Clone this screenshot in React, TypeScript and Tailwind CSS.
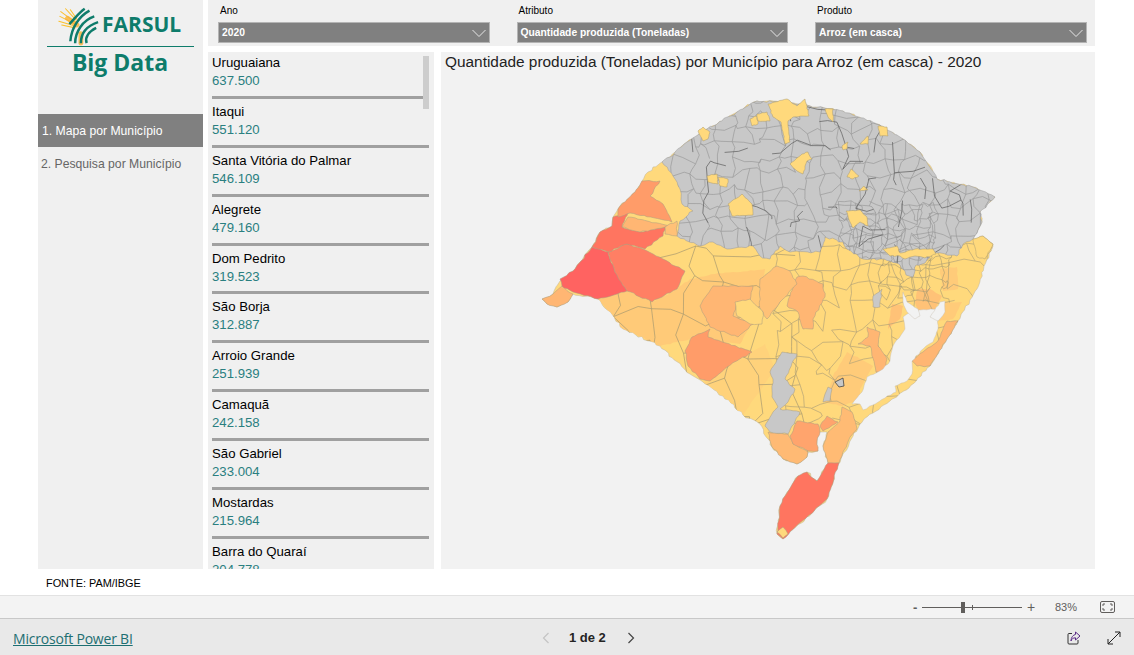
import React, { useMemo } from "react";

type Pt = [number, number];

const municipios = [
  ["Uruguaiana", "637.500"],
  ["Itaqui", "551.120"],
  ["Santa Vitória do Palmar", "546.109"],
  ["Alegrete", "479.160"],
  ["Dom Pedrito", "319.523"],
  ["São Borja", "312.887"],
  ["Arroio Grande", "251.939"],
  ["Camaquã", "242.158"],
  ["São Gabriel", "233.004"],
  ["Mostardas", "215.964"],
  ["Barra do Quaraí", "204.778"],
];

const outline: Pt[] = [
  [542, 300], [553, 295], [560, 282], [573, 272], [592, 248], [600, 233], [612, 227], [613, 218], [618, 210],
  [635, 193], [642, 182], [648, 173], [662, 163], [670, 158], [687, 143], [707, 130], [737, 113], [757, 102],
  [780, 103], [810, 107], [843, 112], [877, 125], [903, 140], [920, 153], [937, 180], [973, 188], [995, 198],
  [980, 213], [982, 223], [973, 240], [983, 237], [993, 245], [977, 290], [958, 322], [930, 367], [909, 389],
  [890, 402], [873, 414], [860, 425], [842, 457], [838, 465], [827, 500], [783, 540], [777, 535], [780, 507],
  [785, 497], [798, 477], [807, 473], [817, 482], [828, 464], [823, 447], [827, 433], [820, 433], [817, 442],
  [818, 452], [808, 453], [807, 458], [797, 465], [783, 460], [772, 448], [768, 440], [760, 425], [743, 416],
  [723, 397], [703, 383], [690, 375], [660, 347], [623, 330], [598, 300], [573, 295], [568, 303], [557, 308],
  [547, 305],
];

const grayNorth: Pt[] = [
  [662, 163], [670, 158], [687, 143], [707, 130], [737, 113], [757, 102], [780, 103], [810, 107], [843, 112],
  [877, 125], [903, 140], [920, 153], [937, 180], [973, 188], [995, 198], [980, 213], [982, 223], [973, 240],
  [963, 245], [957, 257], [933, 253], [925, 264], [916, 266], [913, 278], [906, 276], [900, 266], [890, 262],
  [880, 260], [863, 260], [847, 250], [843, 243], [825, 238], [820, 253], [790, 253], [780, 247], [770, 260],
  [760, 257], [753, 247], [727, 250], [713, 243], [700, 247], [677, 237], [680, 222], [693, 212], [682, 205],
  [680, 190], [673, 177],
];

// municipios com cor propria, desenhados por cima da malha
const regions: { fill: string; pts: Pt[] }[] = [
  { fill: "#ffb673", pts: [[542, 300], [553, 295], [562, 287], [573, 295], [568, 303], [557, 308], [547, 305]] },
  { fill: "#ff6361", pts: [[560, 280], [573, 272], [592, 248], [608, 253], [615, 273], [627, 292], [598, 300], [573, 293], [562, 287]] },
  { fill: "#ff7f64", pts: [[608, 253], [627, 245], [643, 250], [663, 260], [685, 272], [677, 290], [652, 303], [627, 292], [615, 273]] },
  { fill: "#ff7560", pts: [[592, 248], [600, 233], [612, 227], [613, 218], [628, 213], [622, 228], [640, 233], [665, 228], [663, 237], [645, 250], [627, 245], [608, 253]] },
  { fill: "#ffb673", pts: [[628, 218], [670, 227], [665, 228], [640, 233], [622, 228]] },
  { fill: "#ff9c69", pts: [[618, 210], [635, 193], [642, 182], [660, 182], [650, 197], [663, 205], [672, 223], [630, 214], [618, 218]] },
  { fill: "#ffc177", pts: [[665, 228], [677, 222], [677, 237], [665, 235]] },
  { fill: "#ffb673", pts: [[797, 278], [803, 277], [823, 285], [825, 298], [813, 320], [813, 330], [803, 330], [798, 313], [787, 307], [790, 297]] },
  { fill: "#ffc177", pts: [[777, 267], [790, 272], [797, 285], [780, 303], [767, 320], [760, 310], [760, 280]] },
  { fill: "#ffb673", pts: [[700, 307], [713, 287], [753, 287], [748, 307], [737, 303], [733, 317], [753, 325], [738, 338], [710, 328]] },
  { fill: "#ffd97c", pts: [[735, 303], [750, 300], [763, 313], [762, 325], [750, 325], [737, 317]] },
  { fill: "#ff9c69", pts: [[692, 338], [710, 330], [708, 338], [752, 353], [727, 368], [710, 382], [700, 380], [688, 367], [685, 352]] },
  { fill: "#ffb673", pts: [[867, 328], [880, 333], [878, 347], [887, 360], [885, 372], [876, 373], [870, 347], [858, 345], [868, 338]] },
  { fill: "#ffb673", pts: [[947, 322], [958, 322], [930, 367], [917, 367], [912, 362], [923, 353], [937, 343]] },
  { fill: "#ffba74", pts: [[768, 433], [788, 435], [793, 445], [808, 453], [807, 458], [797, 465], [783, 460], [772, 448]] },
  { fill: "#ffa46d", pts: [[797, 422], [818, 425], [820, 433], [817, 442], [818, 452], [808, 452], [793, 445], [790, 437]] },
  { fill: "#ffa46d", pts: [[820, 427], [827, 417], [838, 423], [823, 432]] },
  { fill: "#ffbb74", pts: [[842, 408], [852, 413], [857, 430], [850, 438], [842, 457], [839, 464], [828, 464], [823, 447], [828, 433], [840, 422]] },
  { fill: "#ff7560", pts: [[828, 464], [839, 464], [827, 500], [783, 540], [777, 535], [780, 507], [785, 497], [798, 477], [807, 473], [817, 482]] },
  { fill: "#ffd97c", pts: [[777, 533], [783, 528], [788, 535], [783, 539]] },
  { fill: "#c8c8c8", pts: [[782, 353], [797, 355], [785, 380], [795, 390], [788, 403], [780, 410], [800, 413], [792, 427], [788, 435], [770, 433], [765, 427], [773, 413], [778, 408], [772, 398], [773, 380], [770, 373]] },
  { fill: "#c8c8c8", pts: [[828, 388], [832, 390], [830, 402], [823, 403], [825, 395]] },
  { fill: "#c8c8c8", pts: [[873, 297], [882, 290], [880, 308], [873, 308]] },
];

const tones: { fill: string; pts: Pt[] }[] = [
  { fill: "#ffca78", pts: [[598, 300], [627, 292], [652, 303], [677, 290], [690, 280], [715, 275], [765, 270], [760, 310], [740, 345], [690, 340], [660, 347], [623, 330]] },
  { fill: "#ffd27b", pts: [[703, 383], [723, 397], [743, 416], [775, 370], [765, 345], [725, 368], [710, 382]] },
  { fill: "#ffcb79", pts: [[833, 377], [847, 353], [873, 367], [860, 390], [860, 400], [842, 407], [823, 403], [830, 387]] },
  { fill: "#ffc277", pts: [[918, 290], [930, 290], [942, 297], [933, 313], [920, 317], [915, 303]] },
  { fill: "#ffcb79", pts: [[940, 270], [957, 268], [958, 290], [943, 292]] },
  { fill: "#ffcb79", pts: [[943, 303], [962, 303], [953, 320], [938, 322]] },
  { fill: "#ffc277", pts: [[892, 305], [903, 307], [900, 320], [888, 330]] },
];

// municipios amarelos no meio da area cinza
const islands: Pt[][] = [
  [[698, 132], [703, 128], [710, 133], [708, 140], [703, 142]],
  [[707, 177], [717, 175], [718, 185], [708, 183]],
  [[718, 178], [728, 180], [727, 188], [720, 187]],
  [[728, 205], [742, 195], [752, 205], [753, 216], [732, 217]],
  [[750, 120], [757, 117], [758, 125], [752, 127]],
  [[757, 115], [767, 113], [770, 122], [758, 122]],
  [[768, 105], [787, 100], [797, 107], [805, 100], [809, 117], [793, 118], [788, 122], [790, 143], [785, 145], [781, 123], [773, 118]],
  [[825, 110], [833, 110], [833, 123], [828, 118]],
  [[878, 127], [887, 128], [888, 137], [880, 137]],
  [[860, 145], [868, 137], [868, 145]],
  [[842, 147], [848, 143], [847, 150], [843, 151]],
  [[790, 165], [802, 155], [808, 153], [812, 160], [807, 162], [803, 175], [797, 172]],
  [[847, 178], [851, 170], [859, 177], [853, 180]],
  [[859, 192], [864, 187], [868, 191]],
  [[846, 212], [860, 211], [867, 218], [868, 227], [860, 223], [853, 229], [850, 223]],
  [[973, 240], [983, 237], [993, 245], [985, 260], [977, 258]],
  [[883, 250], [897, 247], [900, 254], [915, 250], [933, 250], [936, 255], [925, 259], [915, 257], [905, 260], [900, 257], [890, 257]],
];

const lagoons: Pt[][] = [
  [[938, 310], [938, 330], [933, 343], [923, 350], [912, 362], [912, 375], [907, 382], [895, 387], [896, 393], [885, 399], [873, 406], [863, 411], [860, 405], [852, 405], [862, 393], [867, 378], [883, 370], [890, 362], [893, 347], [905, 330], [903, 318], [912, 312]],
  [[903, 293], [907, 303], [918, 310], [920, 317], [915, 320], [907, 313], [903, 303]],
  [[940, 303], [945, 302], [945, 313], [938, 322], [930, 318]],
];

const rng = (seed: number) => () => {
  seed = (seed * 1664525 + 1013904223) >>> 0;
  return seed / 4294967296;
};

// quebra as arestas retas para a fronteira parecer irregular
const jag = (pts: Pt[], amp: number, seed: number, step = 3.5) => {
  const r = rng(seed);
  const out: string[] = [];
  pts.forEach((p, i) => {
    const q = pts[(i + 1) % pts.length];
    const n = Math.max(1, Math.round(Math.hypot(q[0] - p[0], q[1] - p[1]) / step));
    for (let k = 0; k < n; k++) {
      const t = k / n;
      const dx = k === 0 ? 0 : (r() - 0.5) * amp;
      const dy = k === 0 ? 0 : (r() - 0.5) * amp;
      out.push(`${(p[0] + (q[0] - p[0]) * t + dx).toFixed(1)},${(p[1] + (q[1] - p[1]) * t + dy).toFixed(1)}`);
    }
  });
  return "M" + out.join("L") + "Z";
};

const mesh = (x0: number, y0: number, x1: number, y1: number, cell: number, drop: number, seed: number) => {
  const r = rng(seed);
  const cols = Math.ceil((x1 - x0) / cell);
  const rows = Math.ceil((y1 - y0) / cell);
  const nodes: Pt[][] = [];
  for (let j = 0; j <= rows; j++) {
    nodes.push([]);
    for (let i = 0; i <= cols; i++) {
      nodes[j].push([x0 + i * cell + (r() - 0.5) * cell * 0.8, y0 + j * cell + (r() - 0.5) * cell * 0.8]);
    }
  }
  const edge = (a: Pt, b: Pt) => {
    const mx = (a[0] + b[0]) / 2 + (r() - 0.5) * cell * 0.5;
    const my = (a[1] + b[1]) / 2 + (r() - 0.5) * cell * 0.5;
    return `M${a[0].toFixed(1)},${a[1].toFixed(1)}L${mx.toFixed(1)},${my.toFixed(1)}L${b[0].toFixed(1)},${b[1].toFixed(1)}`;
  };
  let d = "";
  for (let j = 0; j <= rows; j++) {
    for (let i = 0; i <= cols; i++) {
      if (i < cols && r() > drop) d += edge(nodes[j][i], nodes[j][i + 1]);
      if (j < rows && r() > drop) d += edge(nodes[j][i], nodes[j + 1][i]);
    }
  }
  return d;
};

const RsMap = () => {
  const paths = useMemo(
    () => ({
      state: jag(outline, 2.2, 7),
      gray: jag(grayNorth, 2, 11),
      westMesh: mesh(590, 250, 790, 440, 34, 0.2, 3),
      eastMesh: mesh(780, 250, 990, 420, 19, 0.15, 17),
      denseSouth: mesh(880, 250, 950, 300, 10, 0.12, 21),
      northMesh: mesh(660, 100, 1000, 262, 15, 0.14, 5),
      denseNorth: mesh(840, 205, 930, 262, 8, 0.12, 9),
      darkNorth: mesh(690, 110, 960, 250, 19, 0.78, 13),
    }),
    []
  );

  return (
    <svg viewBox="441 73 654 496" className="w-[654px] h-[496px] block blur-[0.3px]">
      <defs>
        <clipPath id="state-clip">
          <path d={paths.state} />
        </clipPath>
        <clipPath id="gray-clip">
          <path d={paths.gray} />
        </clipPath>
      </defs>
      <path d={paths.state} fill="#ffd97c" stroke="#c0b498" strokeWidth="0.5" />
      <g clipPath="url(#state-clip)">
        {tones.map((t, i) => (
          <path key={i} d={jag(t.pts, 1.2, 30 + i)} fill={t.fill} />
        ))}
        <path d={paths.westMesh} fill="none" stroke="#a89a70" strokeWidth="0.7" />
        <path d={paths.eastMesh} fill="none" stroke="#b3a478" strokeWidth="0.7" />
        <path d={paths.denseSouth} fill="none" stroke="#a89a70" strokeWidth="0.6" />
      </g>
      <path d={paths.gray} fill="#c8c8c8" stroke="#9a9a9a" strokeWidth="0.5" />
      <g clipPath="url(#gray-clip)">
        <path d={paths.northMesh} fill="none" stroke="#999999" strokeWidth="0.7" />
        <path d={paths.denseNorth} fill="none" stroke="#949494" strokeWidth="0.6" />
        <path d={paths.darkNorth} fill="none" stroke="#5c5c5c" strokeWidth="0.7" />
      </g>
      {regions.map((reg, i) => (
        <path key={i} d={jag(reg.pts, 1.4, 60 + i)} fill={reg.fill} stroke="#a89c80" strokeWidth="0.5" />
      ))}
      {islands.map((pts, i) => (
        <path key={i} d={jag(pts, 1, 90 + i, 2.5)} fill="#ffd97c" stroke="#a89a70" strokeWidth="0.5" />
      ))}
      <polygon points="835,383 843,379 844,387 839,388" fill="#c8c8c8" stroke="#444" strokeWidth="0.8" />
      {lagoons.map((pts, i) => (
        <path key={i} d={jag(pts, 1.2, 120 + i)} fill="#f2f2f2" stroke="#c4bcac" strokeWidth="0.4" />
      ))}
    </svg>
  );
};

const FarsulLogo = () => (
  <svg viewBox="0 0 46 42" className="w-[44px] h-[42px] shrink-0">
    <g stroke="#fbc02d" strokeWidth="1.1" strokeLinecap="round" fill="none">
      <path d="M20 20 L4 12" />
      <path d="M20 18 L5 7" />
      <path d="M21 16 L10 4" />
      <path d="M20 22 L3 17" />
      <path d="M20 24 L6 21" />
      <path d="M22 15 L15 5" />
    </g>
    <g fill="none" stroke="#f9b233" strokeWidth="5" strokeLinecap="round" opacity="0.8">
      <path d="M12 14 L22 21" />
      <path d="M26 30 L26 40" />
    </g>
    <g fill="none" stroke="#0e7c6b" strokeWidth="2.6">
      <path d="M15 38 C16 24 24 12 35 6" />
      <path d="M20 40 C20 28 28 16 40 12" />
      <path d="M26 40 C26 30 32 22 44 18" />
      <path d="M32 40 C30 34 34 28 42 24" />
      <path d="M14 20 C20 14 24 8 30 4" />
    </g>
  </svg>
);

const Select = ({ label, value }: { label: string; value: string }) => (
  <div className="w-[271.5px] flex flex-col">
    <span className="pl-[2px] h-[22px] pt-[5px] text-[10px] leading-[12px] text-black">{label}</span>
    <div className="h-[21px] bg-[#808080] border border-[#b4b4b4] flex items-center justify-between pl-[3px] pr-[2px]">
      <span className="text-[10.3px] font-bold text-white pt-[1px]">{value}</span>
      <svg width="16" height="10" viewBox="0 0 16 10" fill="none" stroke="#e6e6e6" strokeWidth="1">
        <path d="M1.5 2 L8 8.5 L14.5 2" />
      </svg>
    </div>
  </div>
);

export default function App() {
  return (
    <div className="w-[1134px] h-[655px] bg-white overflow-hidden flex flex-col font-['Liberation_Sans',Arial,sans-serif]">
      <div className="h-[569px] flex pl-[38px] gap-[5px]">
        {/* Sidebar */}
        <div className="w-[165px] bg-[#f0f0f0] flex flex-col">
          <div className="h-[114px] flex flex-col items-center">
            <div className="h-[46px] w-[147px] flex items-center pt-[3px] pl-[9px] gap-[2px]">
              <FarsulLogo />
              <span className="font-['Open_Sans',sans-serif] font-bold text-[21px] leading-none text-[#0e7c6b]">FARSUL</span>
            </div>
            <div className="w-[147px] h-[1px] bg-[#0e7c6b]" />
            <span className="font-['Open_Sans',sans-serif] font-bold text-[23px] leading-[31px] text-[#0e7c6b] ml-[-1px]">Big Data</span>
          </div>
          <div className="h-[33px] bg-[#808080] flex items-center pl-[4px] pt-[1px] text-[12.2px] text-white">1. Mapa por Município</div>
          <div className="h-[33px] flex items-center pl-[3px] pt-[1px] text-[12.2px] text-[#666666]">2. Pesquisa por Município</div>
        </div>

        <div className="w-[887px] flex flex-col gap-[6px]">
          {/* Filtros */}
          <div className="h-[46px] bg-[#f0f0f0] flex pl-[10px] gap-[27px]">
            <Select label="Ano" value="2020" />
            <Select label="Atributo" value="Quantidade produzida (Toneladas)" />
            <Select label="Produto" value="Arroz (em casca)" />
          </div>

          <div className="flex-1 min-h-0 flex gap-[7px]">
            {/* Lista de municipios */}
            <div className="relative w-[226px] bg-[#f0f0f0] overflow-hidden pl-[4px] pr-[5px]">
              <div className="mt-[-2px]">
                {municipios.map(([nome, valor]) => (
                  <div key={nome} className="h-[48.9px] pt-[3px] flex flex-col border-b-[3px] border-[#a0a0a0]">
                    <span className="h-[19px] leading-[19px] text-[13.2px] text-black">{nome}</span>
                    <span className="h-[18px] leading-[18px] text-[13.2px] text-[#2a7f80]">{valor}</span>
                  </div>
                ))}
              </div>
              <div className="absolute left-[215px] top-[4px] w-[6px] h-[53px] bg-[#cdcdcd]" />
            </div>

            {/* Mapa */}
            <div className="w-[654px] bg-[#f2f2f2] flex flex-col">
              <div className="h-[20px] pl-[4px] pt-[1px] text-[15.4px] leading-[18px] text-[#222222]">
                Quantidade produzida (Toneladas) por Município para Arroz (em casca) - 2020
              </div>
              <RsMap />
            </div>
          </div>
        </div>
      </div>

      <div className="h-[26px] pl-[46px] pt-[2px] flex items-center text-[10.9px] text-black">FONTE: PAM/IBGE</div>

      {/* Barra de zoom */}
      <div className="h-[24px] bg-[#f3f3f3] border-t border-[#e2e2e2] border-b border-b-[#c8c8c8] flex items-center pl-[913px] text-[#605e5c]">
        <span className="w-[9px] text-[13px] font-bold leading-none">-</span>
        <div className="relative w-[100px] h-[1px] bg-[#605e5c]">
          <div className="absolute left-[39px] top-[-5px] w-[4px] h-[11px] bg-[#605e5c]" />
          <div className="absolute left-[50px] top-[-2px] w-[1px] h-[5px] bg-[#605e5c]" />
        </div>
        <span className="ml-[5px] w-[10px] text-[14px] leading-none">+</span>
        <span className="ml-[18px] text-[11px]">83%</span>
        <svg className="ml-[23px]" width="15" height="12" viewBox="0 0 15 12" fill="none" stroke="#605e5c" strokeWidth="1">
          <rect x="0.5" y="0.5" width="14" height="11" rx="1.5" />
          <path d="M3 5 V3 H5 M10 3 H12 V5 M12 7 V9 H10 M5 9 H3 V7" />
        </svg>
      </div>

      {/* Rodape Power BI */}
      <div className="flex-1 bg-[#e9e9e9] flex items-center pl-[13px] pt-[2px]">
        <a className="w-[528px] text-[14px] underline text-[#1d6f72] font-['Open_Sans',sans-serif] tracking-[-0.2px]">Microsoft Power BI</a>
        <svg width="10" height="12" viewBox="0 0 10 12" fill="none" stroke="#c4c4c4" strokeWidth="1.2">
          <path d="M7.5 1 L2.5 6 L7.5 11" />
        </svg>
        <span className="ml-[18px] w-[57px] text-[13px] font-bold text-[#252423]">1 de 2</span>
        <svg width="10" height="12" viewBox="0 0 10 12" fill="none" stroke="#444444" strokeWidth="1.2">
          <path d="M2.5 1 L7.5 6 L2.5 11" />
        </svg>
        <svg className="ml-[431px]" width="14" height="14" viewBox="0 0 14 14" fill="none" stroke="#333333" strokeWidth="1">
          <path d="M5 2.5 H2 A1 1 0 0 0 1 3.5 V12 A1 1 0 0 0 2 13 H10 A1 1 0 0 0 11 12 V9" />
          <path d="M8.5 1 L13 5 L8.5 9 V6.8 C6 6.8 4.5 8 4 10 C4 6.5 6 4 8.5 3.4 Z" stroke="#5b2a86" />
        </svg>
        <svg className="ml-[26px]" width="14" height="14" viewBox="0 0 14 14" fill="none" stroke="#222222" strokeWidth="1">
          <path d="M1 13 L13 1 M8 1 H13 V6 M1 8 V13 H6" />
        </svg>
      </div>
    </div>
  );
}
